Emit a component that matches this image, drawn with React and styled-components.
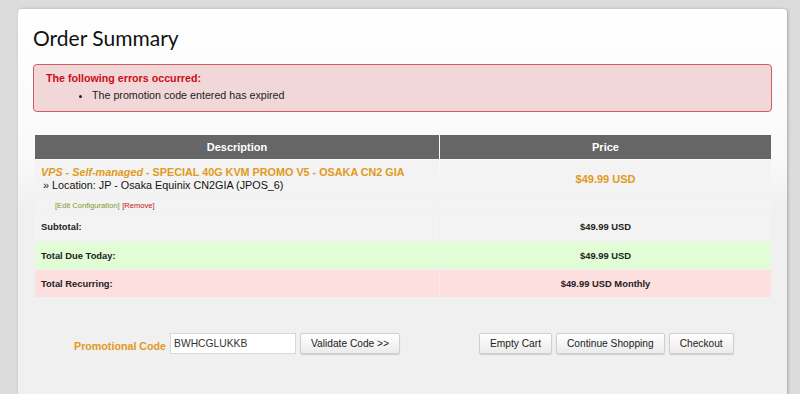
import styled, { createGlobalStyle } from "styled-components";

const GlobalStyle = createGlobalStyle`
  html, body {
    margin: 0;
    padding: 0;
    background: #dcdcdc;
    font-family: "Liberation Sans", Arial, sans-serif;
    height: 394px;
    overflow: hidden;
  }
`;

const Page = styled.div`
  padding: 9px 13px 0 18px;
`;

const Panel = styled.div`
  background: linear-gradient(#ffffff 0px, #f9f9f9 150px, #f0f0f0 200px);
  border-radius: 4px 4px 0 0;
  box-shadow: 1px 0 3px rgba(0, 0, 0, 0.25);
  padding: 16px 15px 40px 15px;
  min-height: 400px;
`;

const Title = styled.h1`
  font-family: Lato, "Open Sans", sans-serif;
  font-weight: 400;
  font-size: 21px;
  line-height: 26px;
  color: #111;
  margin: 0 0 13px 0;
`;

const ErrorBox = styled.div`
  background: #f2d7d9;
  border: 1px solid #cf5c5f;
  border-radius: 4px;
  padding: 6px 12px 9px 12px;
  font-size: 10.7px;
  line-height: 14px;
`;

const ErrorTitle = styled.div`
  color: #cc0d16;
  font-weight: bold;
  margin-bottom: 3px;
`;

const ErrorList = styled.ul`
  margin: 0;
  padding-left: 46px;
  color: #222;
`;

const Table = styled.table`
  width: 738px;
  margin: 22px 0 0 1px;
  border-collapse: separate;
  border-spacing: 1px;
`;

const Head = styled.th`
  background: #666;
  color: #fff;
  font-weight: bold;
  font-size: 11px;
  height: 24px;
  padding: 0;
  width: ${({ $w }) => $w || "auto"};
`;

const Cell = styled.td`
  background: ${({ $bg }) => $bg || "#f3f3f3"};
  height: ${({ $h }) => $h || "auto"};
  padding: ${({ $pad }) => $pad || "0 6px"};
  text-align: ${({ $center }) => ($center ? "center" : "left")};
  font-weight: ${({ $bold }) => ($bold ? "bold" : "normal")};
  font-size: 9.4px;
  line-height: 12px;
  color: #222;
  vertical-align: middle;
`;

const ProductName = styled.div`
  color: #e09a1c;
  font-weight: bold;
  font-size: 10.8px;
  line-height: 13px;
  white-space: nowrap;
  & em {
    font-style: italic;
  }
`;

const Location = styled.div`
  font-size: 10.8px;
  line-height: 13px;
  color: #111;
  padding-left: 2px;
`;

const Price = styled.span`
  color: #e09a1c;
  font-weight: bold;
  font-size: 11px;
`;

const EditLink = styled.span`
  color: ${({ $red }) => ($red ? "#cc1111" : "#7c9a2a")};
  font-size: 7.6px;
`;

const Actions = styled.div`
  display: flex;
  align-items: center;
  margin-top: 35px;
  padding-left: 41px;
`;

const PromoLabel = styled.label`
  color: #e09a1c;
  font-weight: bold;
  font-size: 10.7px;
  margin-right: 4px;
  padding-top: 5px;
`;

const Input = styled.input`
  width: 126px;
  height: 21px;
  box-sizing: border-box;
  border: 1px solid #d8d8d8;
  background: #fff;
  font-family: "Liberation Sans", Arial, sans-serif;
  font-size: 10.3px;
  padding: 0 3px;
  color: #333;
  outline: none;
`;

const Button = styled.button`
  height: 21px;
  box-sizing: border-box;
  padding: 0 10px;
  border: 1px solid #cfcfcf;
  border-radius: 2px;
  background: linear-gradient(#ffffff, #ebebeb);
  box-shadow: 0 1px 1px rgba(0, 0, 0, 0.15);
  font-family: "Liberation Sans", Arial, sans-serif;
  font-size: 10.2px;
  color: #222;
  margin-left: ${({ $ml }) => $ml || "4px"};
`;

export default function App() {
  return (
    <>
      <GlobalStyle />
      <Page>
        <Panel>
          <Title>Order Summary</Title>
          <ErrorBox>
            <ErrorTitle>The following errors occurred:</ErrorTitle>
            <ErrorList>
              <li>The promotion code entered has expired</li>
            </ErrorList>
          </ErrorBox>
          <Table>
            <thead>
              <tr>
                <Head $w="404px">Description</Head>
                <Head>Price</Head>
              </tr>
            </thead>
            <tbody>
              <tr>
                <Cell $h="38px">
                  <ProductName>
                    <em>VPS - Self-managed</em> - SPECIAL 40G KVM PROMO V5 - OSAKA CN2 GIA
                  </ProductName>
                  <Location>» Location: JP - Osaka Equinix CN2GIA (JPOS_6)</Location>
                </Cell>
                <Cell $center>
                  <Price>$49.99 USD</Price>
                </Cell>
              </tr>
              <tr>
                <Cell $h="12px" $pad="0 0 0 20px">
                  <EditLink>[Edit Configuration]</EditLink> <EditLink $red>[Remove]</EditLink>
                </Cell>
                <Cell $h="12px" />
              </tr>
              <tr>
                <Cell $h="28px" $bold>Subtotal:</Cell>
                <Cell $center $bold>$49.99 USD</Cell>
              </tr>
              <tr>
                <Cell $h="27px" $bold $bg="#e1fdd6">Total Due Today:</Cell>
                <Cell $center $bold $bg="#e1fdd6">$49.99 USD</Cell>
              </tr>
              <tr>
                <Cell $h="27px" $bold $bg="#fddfdf">Total Recurring:</Cell>
                <Cell $center $bold $bg="#fddfdf">$49.99 USD Monthly</Cell>
              </tr>
            </tbody>
          </Table>
          <Actions>
            <PromoLabel>Promotional Code</PromoLabel>
            <Input defaultValue="BWHCGLUKKB" />
            <Button>Validate Code &gt;&gt;</Button>
            <Button $ml="79px">Empty Cart</Button>
            <Button>Continue Shopping</Button>
            <Button>Checkout</Button>
          </Actions>
        </Panel>
      </Page>
    </>
  );
}
